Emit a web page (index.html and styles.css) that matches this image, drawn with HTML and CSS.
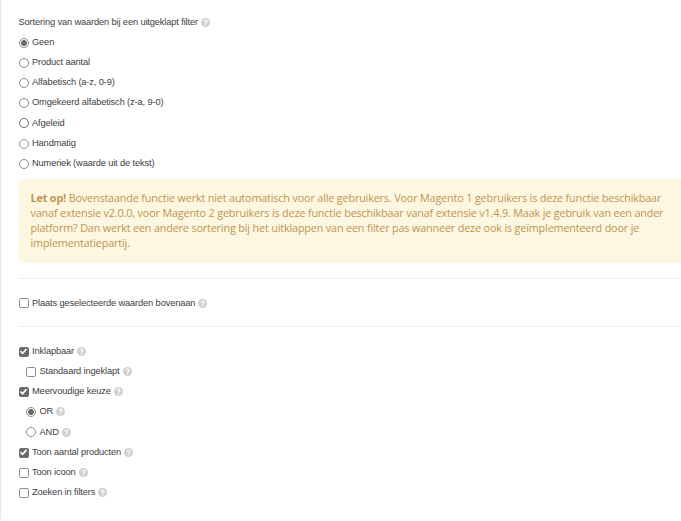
FILE: index.html
```html
<!DOCTYPE html>
<html lang="nl">
<head>
    <meta charset="UTF-8">
    <meta name="viewport" content="width=device-width, initial-scale=1.0">
    <title>Filter instellingen</title>
    <link rel="stylesheet" href="styles.css">
</head>
<body>
    <svg class="sprite">
        <symbol id="help" viewBox="0 0 18 18">
            <circle cx="9" cy="9" r="9" fill="#d0d0d0"/>
            <path d="M6 7.2a2.9 2.6 0 1 1 4.4 2.1c-.9.6-1.4.8-1.4 1.9M9 12.6v2.2" fill="none" stroke="#fff" stroke-width="2.4"/>
        </symbol>
    </svg>
    <div class="card">
        <div class="row"><span class="text">Sortering van waarden bij een uitgeklapt filter</span><svg class="help"><use href="#help"/></svg></div>
        <label class="row"><input type="radio" name="sort" checked><span class="text">Geen</span></label>
        <label class="row"><input type="radio" name="sort"><span class="text">Product aantal</span></label>
        <label class="row"><input type="radio" name="sort"><span class="text">Alfabetisch (a-z, 0-9)</span></label>
        <label class="row"><input type="radio" name="sort"><span class="text">Omgekeerd alfabetisch (z-a, 9-0)</span></label>
        <label class="row"><input type="radio" name="sort" class="dark"><span class="text">Afgeleid</span></label>
        <label class="row"><input type="radio" name="sort"><span class="text">Handmatig</span></label>
        <label class="row"><input type="radio" name="sort"><span class="text">Numeriek (waarde uit de tekst)</span></label>

        <div class="alert">
            <strong>Let op!</strong> Bovenstaande functie werkt niet automatisch voor alle gebruikers. Voor Magento 1 gebruikers is deze functie beschikbaar<br>
            vanaf extensie v2.0.0, voor Magento 2 gebruikers is deze functie beschikbaar vanaf extensie v1.4.9. Maak je gebruik van een ander<br>
            platform? Dan werkt een andere sortering bij het uitklappen van een filter pas wanneer deze ook is geïmplementeerd door je<br>
            implementatiepartij.
        </div>

        <hr>
        <label class="row"><input type="checkbox"><span class="text">Plaats geselecteerde waarden bovenaan</span><svg class="help"><use href="#help"/></svg></label>
        <hr>

        <label class="row"><input type="checkbox" checked><span class="text">Inklapbaar</span><svg class="help"><use href="#help"/></svg></label>
        <label class="row sub"><input type="checkbox"><span class="text">Standaard ingeklapt</span><svg class="help"><use href="#help"/></svg></label>
        <label class="row"><input type="checkbox" checked><span class="text">Meervoudige keuze</span><svg class="help"><use href="#help"/></svg></label>
        <label class="row sub"><input type="radio" name="mode" checked><span class="text">OR</span><svg class="help"><use href="#help"/></svg></label>
        <label class="row sub"><input type="radio" name="mode"><span class="text">AND</span><svg class="help"><use href="#help"/></svg></label>
        <label class="row"><input type="checkbox" checked><span class="text">Toon aantal producten</span><svg class="help"><use href="#help"/></svg></label>
        <label class="row"><input type="checkbox"><span class="text">Toon icoon</span><svg class="help"><use href="#help"/></svg></label>
        <label class="row"><input type="checkbox"><span class="text">Zoeken in filters</span><svg class="help"><use href="#help"/></svg></label>
    </div>
</body>
</html>
```
FILE: styles.css
```css
*{
    margin: 0;
    padding: 0;
    box-sizing: border-box;
}
body{
    background: #fff;
    overflow: hidden;
    font-family: "Liberation Sans", Arial, sans-serif;
    font-size: 9.3px;
    letter-spacing: -0.14px;
    color: #404040;
}
.sprite{
    display: none;
}
.card{
    height: 521px;
    border-left: 1px solid #e6e6f0;
    border-bottom-left-radius: 4px;
    padding: 12px 0 0 17.5px;
}
.row{
    display: flex;
    align-items: center;
    height: 20.2px;
}
.sub{
    margin-left: 7.5px;
}
.text{
    position: relative;
    top: -0.5px;
    white-space: nowrap;
}
input{
    appearance: none;
    flex: none;
    width: 10px;
    height: 10px;
    margin-right: 3.5px;
    border: 1px solid #8f8f8f;
    border-radius: 2px;
    background: #fff;
    position: relative;
    top: 0.3px;
}
input[type="radio"]{
    border-radius: 50%;
}
input.dark{
    border-color: #707070;
}
input[type="radio"]:checked{
    background: radial-gradient(circle, #6b6b6b 2.6px, #fff 3.3px);
}
input[type="checkbox"]:checked{
    background: #6b6b6b;
    border-color: #6b6b6b;
}
input[type="checkbox"]:checked::after{
    content: "";
    position: absolute;
    inset: 0;
    background: #fff;
    clip-path: polygon(5% 52%, 20% 38%, 38% 58%, 78% 10%, 95% 24%, 39% 88%);
}
.help{
    width: 9px;
    height: 9px;
    margin-left: 3px;
}
.alert{
    margin-top: 5.5px;
    height: 83.5px;
    padding: 11px 0 12px 12px;
    border-radius: 4px 0 0 4px;
    background: #fdf7e2;
    color: #bd9450;
    font-family: "Open Sans", sans-serif;
    font-size: 10.8px;
    letter-spacing: -0.155px;
    line-height: 15px;
    white-space: nowrap;
}
hr{
    border: 0;
    border-top: 1px solid #eee;
    margin: 15px 0 14.5px;
}
.row + hr{
    margin-top: 12.5px;
}
```
